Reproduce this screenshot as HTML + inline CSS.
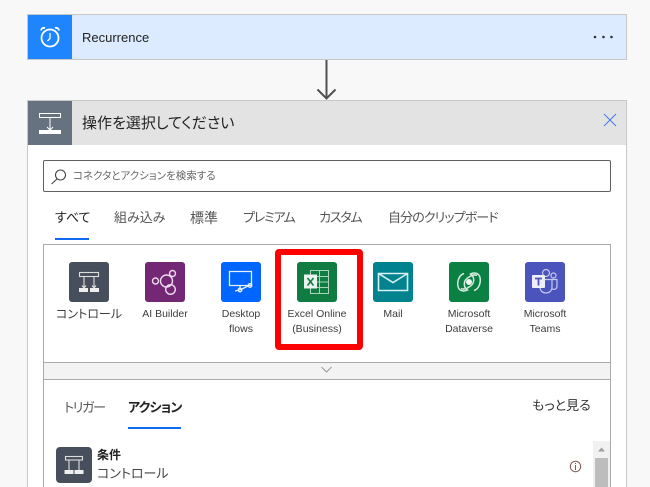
<!DOCTYPE html>
<html lang="ja"><head><meta charset="utf-8">
<style>
*{box-sizing:border-box}
html,body{margin:0;padding:0;width:650px;height:487px;overflow:hidden}
#w{width:650px;height:487px;background:#f8f8f8;position:relative;overflow:hidden;font-family:"Liberation Sans","Noto Sans CJK JP",sans-serif;color:#222;font-feature-settings:"palt"}
.a{position:absolute}
.t{position:absolute;white-space:nowrap;line-height:1}
.ic{position:absolute;top:262px;width:40px;height:40px;border-radius:3px}
.l{position:absolute;width:84px;text-align:center;font-size:10.500px;line-height:15px;color:#3c3c3c;top:307px}
svg{position:absolute;left:0;top:0;overflow:visible}
</style></head><body><div id="w">
<div class="a" style="left:27px;top:14px;width:600px;height:46px;background:#dcebff;border:1px solid #c8c8c8"></div>
<div class="a" style="left:28px;top:15px;width:44px;height:44px;background:#1f85ff">
<svg width="44" height="44" fill="none" stroke="#fff" stroke-width="1.800"><circle cx="22" cy="23" r="8.500"/><path d="M22 18V23.500L19.500 26" stroke-width="1.300"/><path d="M13 15.500a3 3 0 0 1 4-2.500M31 15.500a3 3 0 0 0-4-2.500"/></svg></div>
<div class="t" style="left:82px;top:31px;font-size:13px;color:#222">Recurrence</div>
<svg width="650" height="487" style="z-index:2"><g fill="#333"><circle cx="595" cy="37" r="1.300"/><circle cx="603.500" cy="37" r="1.300"/><circle cx="611.500" cy="37" r="1.300"/></g>
<path d="M326.500 60V98M317.500 89.500L326.500 98.500L335.500 89.500" fill="none" stroke="#505050" stroke-width="2"/></svg>

<div class="a" style="left:27px;top:100px;width:600px;height:400px;background:#fff;border:1px solid #c8c8c8"></div>
<div class="a" style="left:28px;top:101px;width:44px;height:44px;background:#667280"></div>
<div class="a" style="left:72px;top:101px;width:554px;height:44px;background:#e3e3e3"></div>
<div class="a" style="left:28px;top:101px;width:44px;height:44px">
<svg width="44" height="44" fill="none" stroke="#fff"><rect x="11.500" y="12.500" width="21" height="4"/><path d="M22 17V29M19 26L22 29L25 26"/><rect x="11" y="29" width="22" height="4" fill="#fff" stroke="none"/></svg></div>
<div class="t" style="left:82px;top:116px;font-size:15px;color:#222">操作を選択してください</div>
<svg width="650" height="487"><path d="M604 114L616 126M616 114L604 126" stroke="#4a7cf0" stroke-width="1.100" fill="none"/></svg>

<div class="a" style="left:43px;top:160px;width:568px;height:32px;border:1px solid #606060;border-radius:2px"></div>
<svg width="650" height="487"><circle cx="60.500" cy="175" r="5" fill="none" stroke="#444" stroke-width="1.100"/><path d="M57 179L51.500 184" stroke="#444" stroke-width="1.100"/></svg>
<div class="t" style="left:73px;top:171px;font-size:10.500px;color:#666">コネクタとアクションを検索する</div>

<div class="t" style="left:55px;top:211px;font-size:13px;color:#222">すべて</div>
<div class="t" style="left:114px;top:211px;font-size:13px;color:#555">組み込み</div>
<div class="t" style="left:190px;top:211px;font-size:14px;color:#555">標準</div>
<div class="t" style="left:243px;top:211px;font-size:13px;letter-spacing:-1.200px;color:#555">プレミアム</div>
<div class="t" style="left:319px;top:211px;font-size:13px;letter-spacing:-1.200px;color:#555">カスタム</div>
<div class="t" style="left:388px;top:211px;font-size:13px;letter-spacing:-.9px;color:#555">自分のクリップボード</div>
<div class="a" style="left:55px;top:238px;width:34px;height:2px;background:#0f6cf0"></div>

<div class="a" style="left:43px;top:244px;width:568px;height:260px;border:1px solid #aaa"></div>
<div class="a" style="left:44px;top:362px;width:566px;height:18px;background:#f3f3f3;border-top:1px solid #aaa;border-bottom:1px solid #aaa"></div>
<svg width="650" height="487"><path d="M321.500 367L326.500 372L331.500 367" fill="none" stroke="#999" stroke-width="1"/></svg>

<div class="ic" style="left:69px;background:#474f5c"><svg width="40" height="40" fill="none" stroke="#ddd" stroke-width="1.100"><rect x="10.500" y="10.500" width="19" height="4"/><path d="M15 15V26M25 15V26M13 23.500L15 26L17 23.500M23 23.500L25 26L27 23.500"/><rect x="10" y="26" width="9" height="4" fill="#eee" stroke="none"/><rect x="21" y="26" width="9" height="4" fill="#eee" stroke="none"/></svg></div>
<div class="l" style="left:47px;font-size:12px">コントロール</div>

<div class="ic" style="left:145px;background:#742774"><svg width="40" height="40" fill="none" stroke="#eedcee" stroke-width="1.400"><circle cx="10.500" cy="19" r="3"/><circle cx="27.500" cy="11.500" r="3"/><circle cx="25.500" cy="27.500" r="4.800"/><circle cx="21.500" cy="19" r="6"/></svg></div>
<div class="l" style="left:123px">AI Builder</div>

<div class="ic" style="left:221px;background:#0066ff"><svg width="40" height="40" fill="none" stroke="#e8f0ff" stroke-width="1.300"><path d="M8.500 9.500H30.500V23.500H8.500ZM19 23.500V26"/><path d="M14 29L20 27.500L27 24"/><circle cx="19" cy="28" r="1.800"/><circle cx="29" cy="23.500" r="1.800"/></svg></div>
<div class="l" style="left:199px">Desktop<br>flows</div>

<div class="ic" style="left:297px;background:#107c41"><svg width="40" height="40" fill="none" stroke="#a9d4bb" stroke-width="1"><path d="M13.500 8.500H31.500V31.500H13.500ZM22.500 8.500V31.500M13.500 14.500H31.500M13.500 20H31.500M13.500 25.500H31.500"/><rect x="7" y="12.500" width="13" height="14" fill="#e9f4ee" stroke="none"/><path d="M10.500 16L16.500 23.500M16.500 16L10.500 23.500" stroke="#107c41" stroke-width="1.600"/></svg></div>
<div class="l" style="left:275px">Excel Online<br>(Business)</div>

<div class="ic" style="left:373px;background:#00838f"><svg width="40" height="40" fill="none" stroke="#d8f0f2" stroke-width="1.600"><path d="M5.500 11.500H34.500V28.500H5.500ZM5.500 11.500L20 20.500L34.500 11.500"/></svg></div>
<div class="l" style="left:351px">Mail</div>

<div class="ic" style="left:449px;background:#0b8043"><svg width="40" height="40" fill="none" stroke="#d5ebdd" stroke-width="1.500"><path d="M15 11.500C9.500 13 7.500 21 9.500 26C11.500 29.500 15.500 29.500 18.500 28C14 25 14 18 20 15C23 13 26 12.500 28 13.500"/><path d="M25 28.500C30.500 27 32.500 19 30.500 14C28.500 10.500 24.500 10.500 21.500 12C26 15 26 22 20 25C17 27 14 27.500 12 26.500"/><circle cx="20" cy="20" r="3" fill="#eef8f2" stroke="none"/></svg></div>
<div class="l" style="left:427px">Microsoft<br>Dataverse</div>

<div class="ic" style="left:525px;background:#4b53bc"><svg width="40" height="40" fill="none" stroke="#c5c8ee" stroke-width="1.200"><circle cx="21" cy="11" r="3.500"/><circle cx="28.500" cy="13.500" r="2.500"/><path d="M26 17.500H32V24C32 27 29.500 28 27 27M15 18V25C15 33 27 33 27 25V17.500H15"/><rect x="7" y="13" width="13" height="13" rx="1" fill="#eeeffb" stroke="none"/><path d="M10 16.500H17M13.500 16.500V23.500" stroke="#4b53bc" stroke-width="1.800"/></svg></div>
<div class="l" style="left:503px">Microsoft<br>Teams</div>

<div class="a" style="left:275px;top:249px;width:88px;height:101px;border:6px solid #ff0000;border-radius:4px"></div>

<div class="t" style="left:64px;top:401px;font-size:13px;letter-spacing:-1.300px;color:#555">トリガー</div>
<div class="t" style="left:128px;top:401px;font-size:13px;letter-spacing:-.8px;color:#222;font-weight:bold">アクション</div>
<div class="a" style="left:128px;top:427px;width:53px;height:2px;background:#0f6cf0"></div>
<div class="t" style="left:532px;top:399px;font-size:13px;color:#333">もっと見る</div>

<div class="a" style="left:56px;top:447px;width:36px;height:36px;background:#474f5c;border-radius:4px"><svg width="36" height="36" fill="none" stroke="#ddd" stroke-width="1.100"><rect x="9.500" y="9.500" width="17" height="3.500"/><path d="M13 13V23M23 13V23"/><rect x="8.500" y="23" width="9" height="4" fill="#eee" stroke="none"/><rect x="18.500" y="23" width="9" height="4" fill="#eee" stroke="none"/></svg></div>
<div class="t" style="left:97px;top:449px;font-size:12px;font-weight:bold;color:#222">条件</div>
<div class="t" style="left:97px;top:467px;font-size:13px;color:#444">コントロール</div>

<svg width="650" height="487"><circle cx="575.500" cy="466.500" r="5.200" fill="none" stroke="#7a5a50" stroke-width="1"/><path d="M575.500 465V470M575.500 463V464" stroke="#7a5a50"/></svg>
<div class="a" style="left:593px;top:441px;width:17px;height:46px;background:#f1f1f1"></div>
<div class="a" style="left:595px;top:458px;width:13px;height:29px;background:#bdbdbd"></div>
<svg width="650" height="487"><path d="M598 451.500L601.500 447.500L605 451.500Z" fill="#a0a0a0"/></svg>
</div></body></html>
